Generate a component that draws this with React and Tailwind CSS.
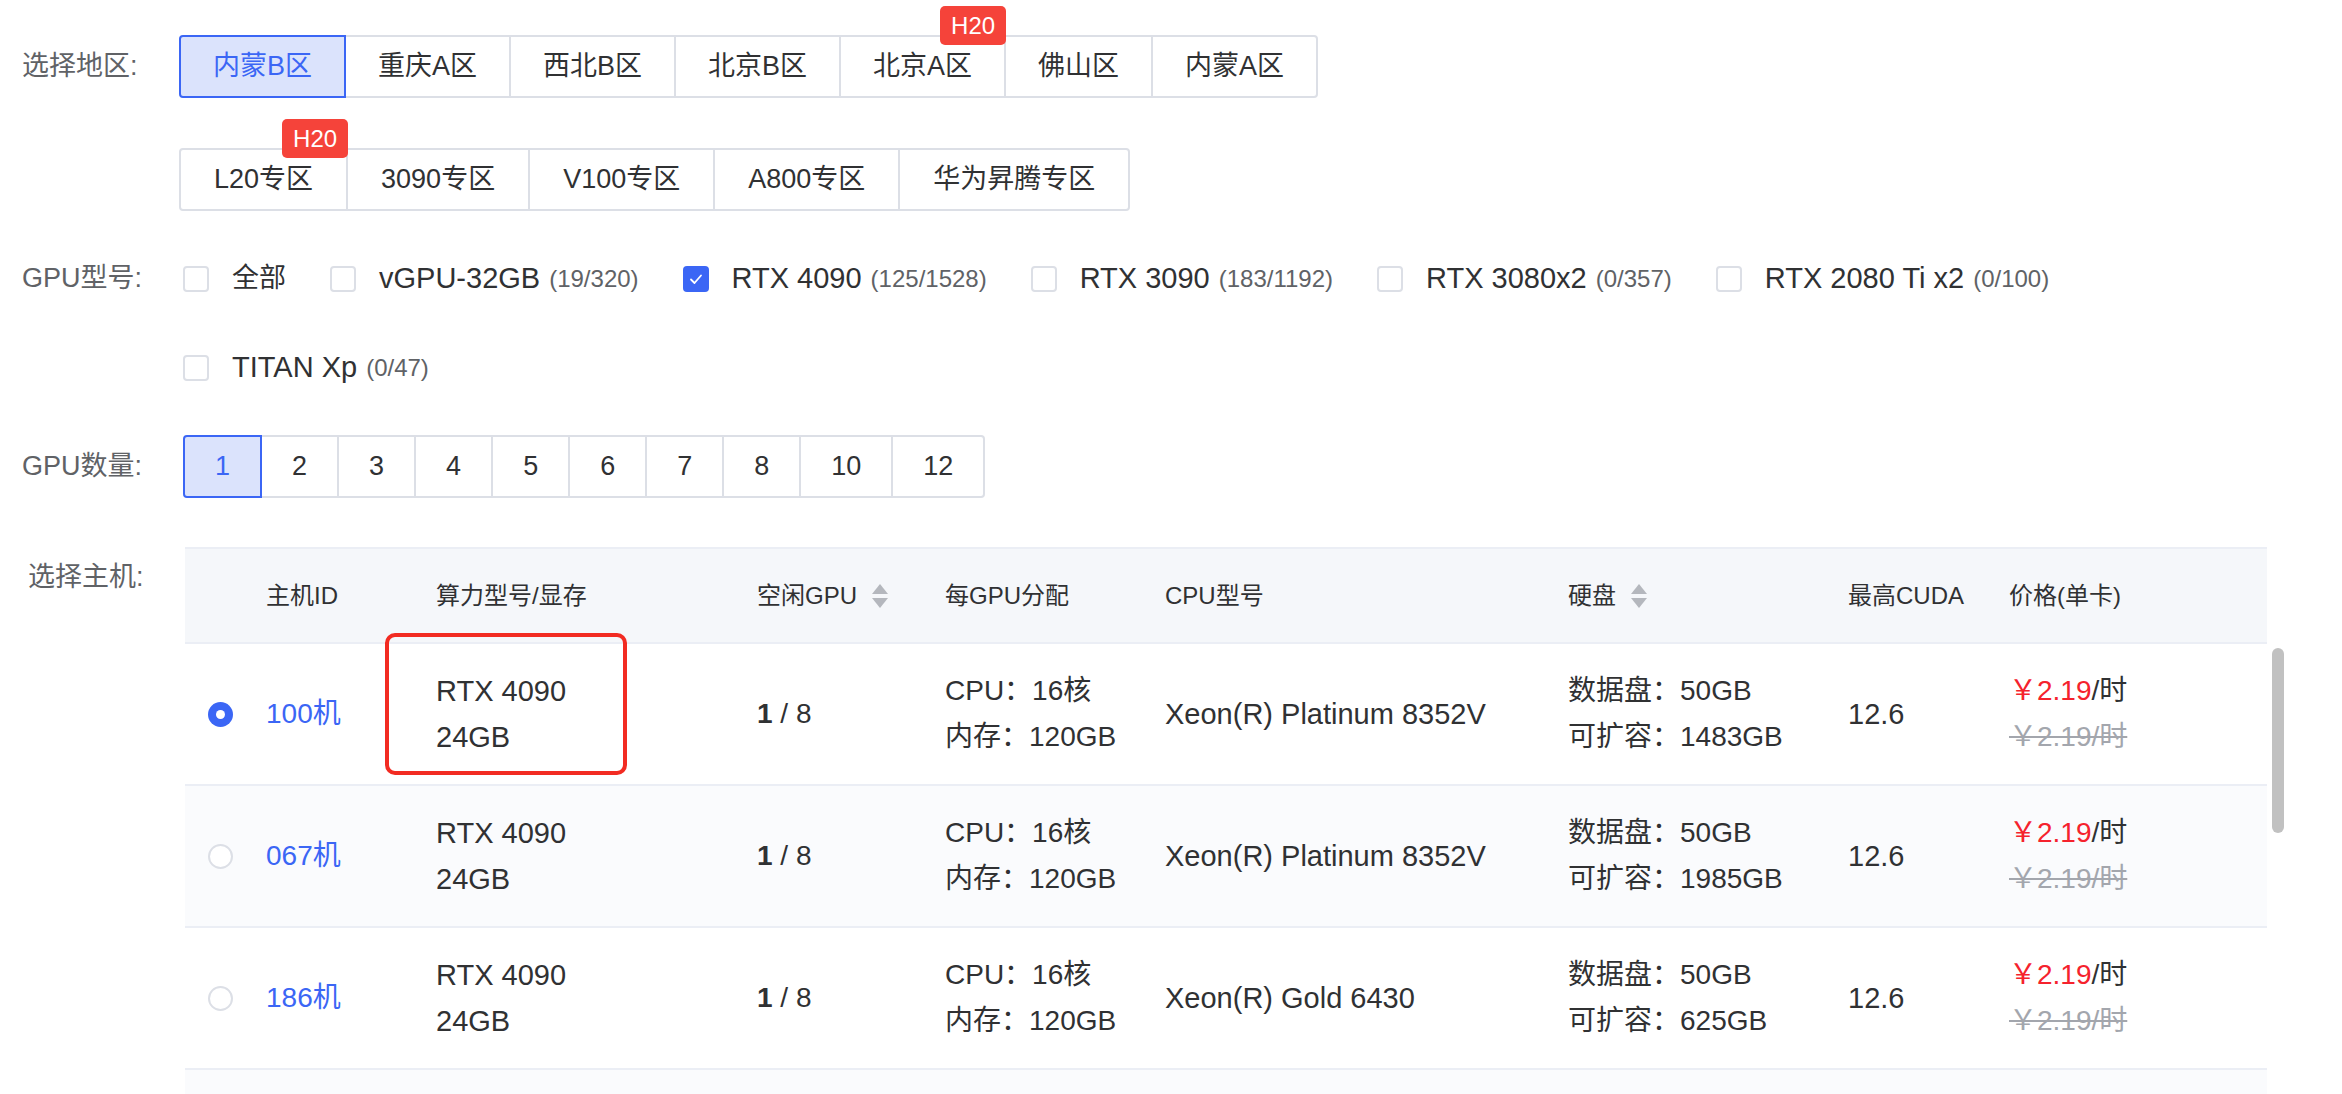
import React from 'react';

const regionsTop = ['内蒙B区', '重庆A区', '西北B区', '北京B区', '北京A区', '佛山区', '内蒙A区'];
const regionsBottom = ['L20专区', '3090专区', 'V100专区', 'A800专区', '华为昇腾专区'];
const counts = ['1', '2', '3', '4', '5', '6', '7', '8', '10', '12'];

const gpuTypes = [
    { name: 'vGPU-32GB', count: '(19/320)' },
    { name: 'RTX 4090', count: '(125/1528)', checked: true },
    { name: 'RTX 3090', count: '(183/1192)' },
    { name: 'RTX 3080x2', count: '(0/357)' },
    { name: 'RTX 2080 Ti x2', count: '(0/100)' },
];

const hosts = [
    { id: '100机', cpu: 'Xeon(R) Platinum 8352V', ext: '1483GB', selected: true },
    { id: '067机', cpu: 'Xeon(R) Platinum 8352V', ext: '1985GB' },
    { id: '186机', cpu: 'Xeon(R) Gold 6430', ext: '625GB' },
];

const cols = 'grid grid-cols-[81px_170px_321px_188px_220px_403px_280px_161px_1fr]';

function Badge() {
    return (
        <span className="absolute -top-[31px] -right-[2px] z-20 h-[39px] w-[66px] rounded-[5px] bg-[#f5433a] text-white text-[24px] font-medium flex items-center justify-center">
            H20
        </span>
    );
}

function Segmented({ items, active, badge, pad = 'px-[34px]' }) {
    return (
        <div className="flex">
            {items.map((label, i) => {
                const on = label === active;
                return (
                    <div
                        key={label}
                        className={`relative h-[63px] ${pad} flex items-center border-2 ${i > 0 ? '-ml-[2px]' : ''} ${i === 0 ? 'rounded-l-[4px]' : ''} ${i === items.length - 1 ? 'rounded-r-[4px]' : ''} ${on ? 'z-10 border-[#3b66f5] bg-[#dbe3fc] text-[#3b66f5]' : 'border-[#dcdfe6] bg-white text-[#303133]'}`}
                    >
                        {label}
                        {badge === label && <Badge />}
                    </div>
                );
            })}
        </div>
    );
}

function Checkbox({ checked }) {
    if (checked) {
        return (
            <span className="w-[26px] h-[26px] rounded-[4px] bg-[#3b66f5] flex items-center justify-center">
                <svg width="20" height="20" viewBox="0 0 20 20" fill="none">
                    <path d="M5 10.5l3.5 3.5L15 6.5" stroke="white" strokeWidth="1.8" strokeLinecap="round" strokeLinejoin="round" />
                </svg>
            </span>
        );
    }
    return <span className="w-[26px] h-[26px] rounded-[4px] border-2 border-[#dcdfe6] bg-white" />;
}

function CheckItem({ name, count, checked, latin = true }) {
    return (
        <div className="flex items-center mr-[44px]">
            <Checkbox checked={checked} />
            <span className={`ml-[23px] text-[#303133] ${latin ? 'text-[29px]' : ''}`}>{name}</span>
            {count && <span className="ml-[9px] text-[24px] text-[#606266]">{count}</span>}
        </div>
    );
}

function SortIcon() {
    return (
        <svg className="ml-[14px]" width="18" height="26" viewBox="0 0 18 26">
            <path d="M9 1L17 11H1Z" fill="#b4b7bd" />
            <path d="M1 15H17L9 25Z" fill="#b4b7bd" />
        </svg>
    );
}

function Radio({ on }) {
    if (on) {
        return (
            <span className="w-[25px] h-[25px] rounded-full bg-[#3b66f5] flex items-center justify-center">
                <span className="w-[9px] h-[9px] rounded-full bg-white" />
            </span>
        );
    }
    return <span className="w-[25px] h-[25px] rounded-full border-2 border-[#dcdfe6] bg-white" />;
}

function HostRow({ host, striped }) {
    return (
        <div className={`relative ${cols} h-[142px] items-center border-b-2 border-[#ebeef5] text-[28px] leading-[46px] text-[#303133] ${striped ? 'bg-[#fafbfd]' : 'bg-white'}`}>
            <div className="pl-[23px] flex items-center">
                <Radio on={host.selected} />
            </div>
            <div className="text-[#3b66f5]">{host.id}</div>
            <div className="text-[29px]">
                <div>RTX 4090</div>
                <div>24GB</div>
            </div>
            <div>
                <span className="font-bold">1</span> / 8
            </div>
            <div>
                <div>CPU：16核</div>
                <div>内存：120GB</div>
            </div>
            <div className="text-[29px]">{host.cpu}</div>
            <div>
                <div>数据盘：50GB</div>
                <div>可扩容：{host.ext}</div>
            </div>
            <div className="text-[29px]">12.6</div>
            <div>
                <div>
                    <span className="text-[#f5222d]">￥2.19</span>/时
                </div>
                <div className="text-[#a3a6ad] line-through">￥2.19/时</div>
            </div>
            {host.selected && (
                <div className="absolute left-[200px] -top-[11px] w-[242px] h-[142px] border-[4px] border-[#f22b22] rounded-[10px] pointer-events-none" />
            )}
        </div>
    );
}

export default function App() {
    return (
        <div className="min-h-screen w-full bg-white pl-[22px] pt-[35px] font-['Liberation_Sans','Noto_Sans_CJK_SC',sans-serif] text-[27px] text-[#303133]">
            {/* 地区 */}
            <div className="flex">
                <div className="w-[157px] shrink-0 h-[63px] flex items-center text-[#606266]">选择地区:</div>
                <div>
                    <Segmented items={regionsTop} active="内蒙B区" badge="北京A区" pad="px-[32px]" />
                    <div className="mt-[50px]">
                        <Segmented items={regionsBottom} badge="L20专区" pad="px-[33px]" />
                    </div>
                </div>
            </div>

            {/* GPU型号 */}
            <div className="flex mt-[45px]">
                <div className="w-[161px] shrink-0 h-[45px] flex items-center text-[#606266]">GPU型号:</div>
                <div>
                    <div className="h-[45px] flex items-center">
                        <CheckItem name="全部" latin={false} />
                        {gpuTypes.map(g => (
                            <CheckItem key={g.name} {...g} />
                        ))}
                    </div>
                    <div className="h-[45px] flex items-center mt-[44px]">
                        <CheckItem name="TITAN Xp" count="(0/47)" />
                    </div>
                </div>
            </div>

            {/* GPU数量 */}
            <div className="flex mt-[45px]">
                <div className="w-[161px] shrink-0 h-[63px] flex items-center text-[#606266]">GPU数量:</div>
                <Segmented items={counts} active="1" pad="px-[30px]" />
            </div>

            {/* 主机 */}
            <div className="flex mt-[49px]">
                <div className="w-[163px] shrink-0 pl-[6px] pt-[10px] leading-[40px] text-[#606266]">选择主机:</div>
                <div className="flex">
                    <div className="w-[2082px]">
                        <div className={`${cols} h-[97px] items-center bg-[#f5f7fa] border-t-2 border-b-2 border-[#ebeef5] text-[24px] text-[#303133]`}>
                            <div />
                            <div>主机ID</div>
                            <div>算力型号/显存</div>
                            <div className="flex items-center">空闲GPU<SortIcon /></div>
                            <div>每GPU分配</div>
                            <div>CPU型号</div>
                            <div className="flex items-center">硬盘<SortIcon /></div>
                            <div>最高CUDA</div>
                            <div>价格(单卡)</div>
                        </div>
                        {hosts.map((h, i) => (
                            <HostRow key={h.id} host={h} striped={i % 2 === 1} />
                        ))}
                        <div className="h-[142px] bg-[#fafbfd] border-b-2 border-[#ebeef5]" />
                    </div>
                    <div className="w-[17px] pt-[101px]">
                        <div className="ml-[5px] w-[12px] h-[185px] rounded-full bg-[#c1c1c1]" />
                    </div>
                </div>
            </div>
        </div>
    );
}
